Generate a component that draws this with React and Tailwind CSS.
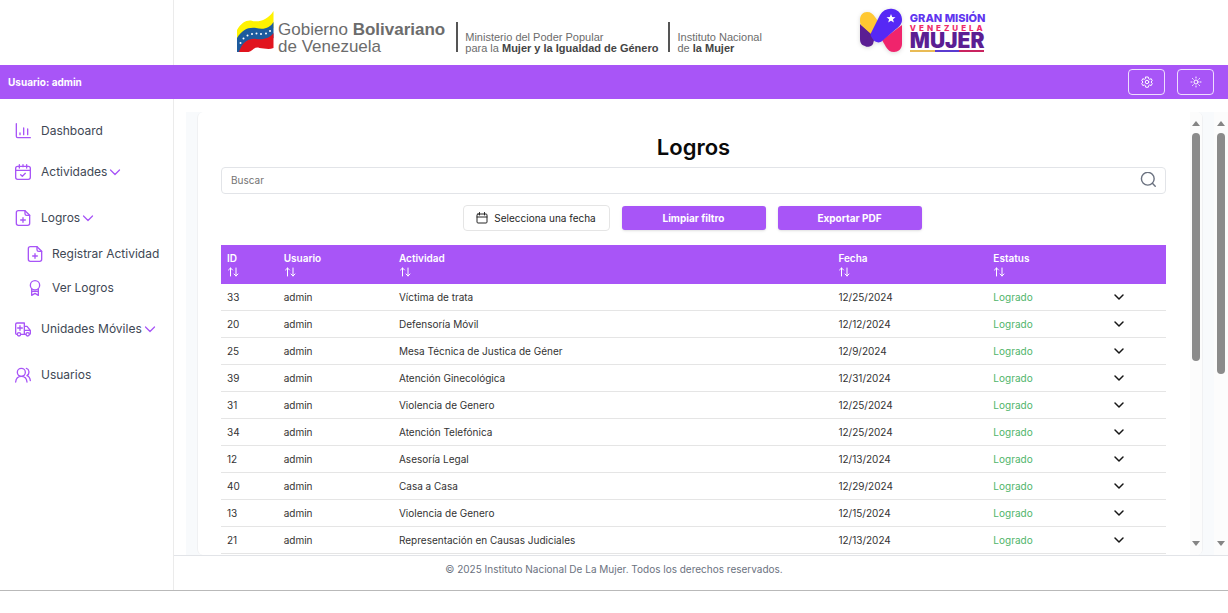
import React from "react";

const rows = [
  ["33", "Víctima de trata", "12/25/2024"],
  ["20", "Defensoría Móvil", "12/12/2024"],
  ["25", "Mesa Técnica de Justica de Géner", "12/9/2024"],
  ["39", "Atención Ginecológica", "12/31/2024"],
  ["31", "Violencia de Genero", "12/25/2024"],
  ["34", "Atención Telefónica", "12/25/2024"],
  ["12", "Asesoría Legal", "12/13/2024"],
  ["40", "Casa a Casa", "12/29/2024"],
  ["13", "Violencia de Genero", "12/15/2024"],
  ["21", "Representación en Causas Judiciales", "12/13/2024"],
];

function Icon({ children, className = "size-4", width = 1.5 }) {
  return (
    <svg viewBox="0 0 24 24" fill="none" stroke="currentColor" strokeWidth={width} strokeLinecap="round" strokeLinejoin="round" className={`shrink-0 ${className}`} aria-hidden="true">
      {children}
    </svg>
  );
}

const icons = {
  chart: (
    <>
      <path d="M2 1v19a2 2 0 0 0 2 2h19" />
      <path d="M7.500 15v2.500M13 7.500v10M19 9v8.500" />
    </>
  ),
  calendar: (
    <>
      <rect x="1" y="3.500" width="22" height="19.500" rx="3" />
      <path d="M1 9.500h22M6.500 1v5M12 1v3M17.500 1v5M8.500 16l2.500 2.500 4.500-4.500" />
    </>
  ),
  file: (
    <>
      <path d="M15 1H5a3 3 0 0 0-3 3v16a3 3 0 0 0 3 3h14a3 3 0 0 0 3-3V8z" />
      <path d="M15 1v4.500A2.500 2.500 0 0 0 17.500 8H22M12 11.500v7M8.500 15h7" />
    </>
  ),
  award: (
    <>
      <circle cx="12" cy="8" r="7" />
      <path d="M7 13.500V23l5-3 5 3v-9.500M8 17h8" />
    </>
  ),
  truck: (
    <>
      <path d="M3 20H2.500A1.500 1.500 0 0 1 1 18.500V5A2 2 0 0 1 3 3H14v17H9M14 8h4l5 6v4.500A1.500 1.500 0 0 1 22 20M14 14h9M7.500 7v7M4 10.500h7M14 20h2" />
      <circle cx="6" cy="20" r="2.500" />
      <circle cx="19" cy="20" r="2.500" />
    </>
  ),
  users: (
    <>
      <circle cx="9.500" cy="8" r="6" />
      <path d="M1 22.500c.5-5 3.500-8.500 8.500-8.500s8 3.500 8.500 8.500M17 2c4.500 1 5.500 8 1 11 3 1 4.500 3.500 5 7.500" />
    </>
  ),
};

function NavItem({ icon, label, chevron, sub, className }) {
  return (
    <a href="#" className={`flex items-center text-[12px] leading-5 text-[#404754] ${sub ? "pl-[27px] gap-[9px]" : "pl-[15px] gap-[10px]"} ${className}`}>
      <Icon className="size-4 text-[#a855f7]" width={2}>{icons[icon]}</Icon>
      <span className="flex items-center gap-[2px] whitespace-nowrap">
        {label}
        {chevron && (
          <Icon className="size-3 text-[#a855f7]" width={2.5}>
            <path d="M3 8l9 9 9-9" />
          </Icon>
        )}
      </span>
    </a>
  );
}

function Scrollbar({ className, thumb }) {
  return (
    <div className={`flex shrink-0 flex-col items-center bg-[#fcfcfc] pt-[9px] pb-[9px] ${className}`} aria-hidden="true">
      <svg viewBox="0 0 8 5" className="h-[5px] w-2 shrink-0 fill-[#858585]"><path d="M0 5L4 0l4 5z" /></svg>
      <div className="mt-[7px] min-h-0 w-full flex-1">
        <div className={`mx-auto w-2 rounded-full bg-[#8b8b8b] ${thumb}`} />
      </div>
      <svg viewBox="0 0 8 5" className="h-[5px] w-2 shrink-0 fill-[#858585]"><path d="M0 0l4 5 4-5z" /></svg>
    </div>
  );
}

function Flag() {
  return (
    <svg viewBox="0 0 37 42" className="mt-[11px] h-[42px] w-[37px] shrink-0" role="img" aria-label="Bandera de Venezuela">
      <path d="M0 19C4 12 9 9 14 9.500C21 12 31 9 36.500 0v17C30 23 24 20 17 20C9 19 4 24 0 31z" fill="#fff200" />
      <path d="M0 27C5 19 11 16 19 17C27 19 33 17 36.500 11v16c-5 6-12 3-17 2C10 28 5 33 3 41H0z" fill="#1d5b9e" />
      <path d="M2 41C5 32 11 27 19 28C27 29 33 27 36.500 22v15c-5 2-10 0-14 0c-5-2-7 3-11 4z" fill="#e1141e" />
      <g fill="#fff">
        <circle cx="3.500" cy="32" r="1" /><circle cx="6.500" cy="27.500" r="1" /><circle cx="10.500" cy="24.500" r="1" /><circle cx="15" cy="23" r="1" />
        <circle cx="19.500" cy="22.500" r="1" /><circle cx="24" cy="23" r="1" /><circle cx="29" cy="22.500" r="1" /><circle cx="33" cy="20" r="1" />
      </g>
    </svg>
  );
}

function MissionMark() {
  return (
    <svg viewBox="0 0 46 46" className="h-[46px] w-[46px] shrink-0 drop-shadow-sm" role="img" aria-label="Gran Misión Venezuela Mujer">
      <path d="M1 16l11 9c-1 3-2 7 0 11-1 3-4 3-6 2C2 37 1 34 1 31z" fill="#5b1e93" />
      <path d="M11 22l8-5-5 19c-2 3-5 3-8 2z" fill="#5b1e93" />
      <path d="M1 12C1 7 4 4 8 4c4 0 6 2 8 5l5 7-9 10L2 17C1 15 1 14 1 12z" fill="#ffc832" />
      <path d="M43 17v19c0 5-4 8-8 8-4 0-6-2-8-5l-4-7z" fill="#f0246c" />
      <path d="M12 25L21 7c3-5 8-7 13-6 6 1 9 6 9 11 0 4-3 7-6 9L23 33c-3 3-8 1-10-3-1-2-2-3-1-5z" fill="#5628f5" />
      <path d="M32 6l1.200 3 3.300.2-2.500 2 .9 3.300-2.900-1.800-2.800 1.800.9-3.300-2.600-2 3.300-.2z" fill="#fff" />
    </svg>
  );
}

export default function App() {
  return (
    <div className="flex h-screen flex-col bg-white pb-[22px] font-['Inter','Liberation_Sans',sans-serif]">
      <div className="flex min-h-0 flex-1 flex-col border-b border-[#b9b9b9]">
        <header className="flex h-[65px] shrink-0">
          <div className="w-[174px] shrink-0 border-r border-[#ebebeb]" />
          <div className="flex flex-1 items-start pl-[63px] font-['Liberation_Sans',Arial,sans-serif] whitespace-nowrap text-[#6c6c6c]">
            <Flag />
            <p className="mt-[21px] ml-1 text-[17px] leading-[17px]">
              Gobierno <b>Bolivariano</b><br />de Venezuela
            </p>
            <div className="mt-[22px] ml-[11px] h-[30px] w-[2px] bg-[#555]" />
            <p className="mt-8 ml-[7px] text-[11px] leading-[11px]">
              Ministerio del Poder Popular<br />para la <b className="text-[#444]">Mujer y la Igualdad de Género</b>
            </p>
            <div className="mt-[22px] ml-[10px] h-[30px] w-[2px] bg-[#555]" />
            <p className="mt-8 ml-[7px] text-[11px] leading-[11px]">
              Instituto Nacional<br />de <b className="text-[#444]">la Mujer</b>
            </p>
            <div className="mt-2 ml-[97px] flex gap-[5px] font-['Inter',sans-serif]">
              <MissionMark />
              <div className="flex flex-col pt-1">
                <span className="text-[11px] leading-[13px] font-extrabold text-[#6035ef]">GRAN MISIÓN</span>
                <span className="text-[8px] leading-[7px] font-extrabold tracking-[3px] text-[#ee2a68]">VENEZUELA</span>
                <span className="text-[21px] leading-[18px] font-black text-[#5b1e93]">MUJER</span>
                <span className="flex h-[2px] w-[74px]">
                  <span className="flex-1 bg-[#e9bb55]" /><span className="flex-1 bg-[#5a3bd0]" /><span className="flex-1 bg-[#c9235f]" />
                </span>
              </div>
            </div>
          </div>
        </header>

        <div className="flex h-[34px] shrink-0 items-center bg-[#a855f7] pr-[14px] pl-2 text-white">
          <span className="text-[10px] font-bold">Usuario: admin</span>
          <div className="ml-auto flex gap-3">
            <button type="button" aria-label="Configuración" className="flex h-[26px] w-[37px] items-center justify-center rounded border border-white/80">
              <Icon className="size-3" width={2}>
                <path d="M9.500 2h5l.8 3.500 1.700 1 3.500-1 2 4-2.500 2.500 2.500 3-2 4-3.500-1-1.700 1-.8 3.500h-5l-.8-3.500-1.700-1-3.500 1-2-4L4 12 1.500 9.500l2-4 3.500 1 1.700-1z" />
                <circle cx="12" cy="12" r="3.500" />
              </Icon>
            </button>
            <button type="button" aria-label="Cambiar tema" className="flex h-[26px] w-[37px] items-center justify-center rounded border border-white/80">
              <Icon className="size-3" width={2}>
                <circle cx="12" cy="12" r="4" />
                <path d="M12 2v2M12 20v2M2 12h2M20 12h2M5 5l1.500 1.500M17.500 17.500L19 19M5 19l1.500-1.500M17.500 6.500L19 5" />
              </Icon>
            </button>
          </div>
        </div>

        <div className="flex min-h-0 flex-1">
          <nav className="w-[174px] shrink-0 border-r border-[#ebebeb] pt-[22px]">
            <NavItem icon="chart" label="Dashboard" />
            <NavItem icon="calendar" label="Actividades" chevron className="mt-[21px]" />
            <NavItem icon="file" label="Logros" chevron className="mt-[26px]" />
            <NavItem icon="file" label="Registrar Actividad" sub className="mt-4" />
            <NavItem icon="award" label="Ver Logros" sub className="mt-[14px]" />
            <NavItem icon="truck" label="Unidades Móviles" chevron className="mt-[21px]" />
            <NavItem icon="users" label="Usuarios" className="mt-[26px]" />
          </nav>

          <div className="flex min-w-0 flex-1 flex-col">
            <div className="flex min-h-0 flex-1 pt-[13px] pl-3">
              <main className="flex min-w-0 flex-1 bg-[#f8fafc] px-[11px]">
                <div className="flex min-w-0 flex-1 overflow-hidden rounded-md border-x border-[#f0f1f3] bg-white">
                  <div className="min-w-0 flex-1 overflow-hidden pt-[21px] pr-6 pl-[23px]">
                    <h1 className="text-center text-[22px] leading-7 font-semibold text-[#0a0a0a]">Logros</h1>
                    <label className="mt-[6px] flex h-[27px] items-center rounded border border-[#e2e4e8] pr-2 pl-[9px]">
                      <input type="text" aria-label="Buscar" placeholder="Buscar" className="min-w-0 flex-1 bg-transparent text-[10px] outline-none placeholder:text-[#737373]" />
                      <Icon className="size-[17px] text-[#6b7280]" width={2}>
                        <circle cx="11" cy="9.500" r="9" />
                        <path d="M17.500 16L21.500 20" />
                      </Icon>
                    </label>
                    <div className="mt-[11px] flex justify-center gap-3 pr-[3px]">
                      <button type="button" className="flex h-[26px] w-[147px] items-center justify-center gap-[6px] rounded border border-[#e5e5e5] text-[10px] whitespace-nowrap text-[#262626]">
                        <Icon className="size-3" width={2}>
                          <rect x="2" y="4" width="20" height="18" rx="2" />
                          <path d="M2 10h20M7 1v5M17 1v5" />
                        </Icon>
                        Selecciona una fecha
                      </button>
                      <button type="button" className="h-6 w-36 self-center rounded-[3px] bg-[#a855f7] text-[10px] font-bold text-white shadow-sm">Limpiar filtro</button>
                      <button type="button" className="h-6 w-36 self-center rounded-[3px] bg-[#a855f7] text-[10px] font-bold text-white shadow-sm">Exportar PDF</button>
                    </div>
                    <table className="mt-[14px] w-full table-fixed border-separate border-spacing-0 text-left text-[10px]">
                      <colgroup>
                        <col className="w-[6%]" />
                        <col className="w-[12.2%]" />
                        <col className="w-[46.5%]" />
                        <col className="w-[16.4%]" />
                        <col className="w-[11%]" />
                        <col />
                      </colgroup>
                      <thead className="bg-[#a855f7] text-white">
                        <tr className="h-[39px]">
                          {["ID", "Usuario", "Actividad", "Fecha", "Estatus"].map((h) => (
                            <th key={h} scope="col" className="px-[6px] py-0 leading-[13px] font-semibold">
                              {h}
                              <Icon className="mt-px size-3" width={2}>
                                <path d="M7 20V4M3 8l4-4 4 4M18 4v16M14 16l4 4 4-4" />
                              </Icon>
                            </th>
                          ))}
                          <th aria-label="Detalles" />
                        </tr>
                      </thead>
                      <tbody className="text-[#333]">
                        {rows.map(([id, act, date]) => (
                          <tr key={id} className="h-[27px] *:border-b *:border-[#e5e5e5] *:px-[6px] *:py-0 *:leading-4">
                            <td>{id}</td>
                            <td>admin</td>
                            <td>{act}</td>
                            <td>{date}</td>
                            <td className="text-[#4fb56a]">Logrado</td>
                            <td>
                              <button type="button" aria-label={`Ver detalles de ${id}`} className="ml-4 block text-[#171717]">
                                <Icon className="size-3" width={3}><path d="M4 8l8 8 8-8" /></Icon>
                              </button>
                            </td>
                          </tr>
                        ))}
                      </tbody>
                    </table>
                  </div>
                  <Scrollbar className="w-3" thumb="h-[56%]" />
                </div>
              </main>
              <Scrollbar className="w-[14px]" thumb="h-[59%]" />
            </div>
            <footer className="h-[35px] shrink-0 border-t border-[#e2e4e8] pt-1 pr-[174px] text-center text-[10px] leading-[18px] text-[#6b7280]">
              © 2025 Instituto Nacional De La Mujer. Todos los derechos reservados.
            </footer>
          </div>
        </div>
      </div>
    </div>
  );
}
